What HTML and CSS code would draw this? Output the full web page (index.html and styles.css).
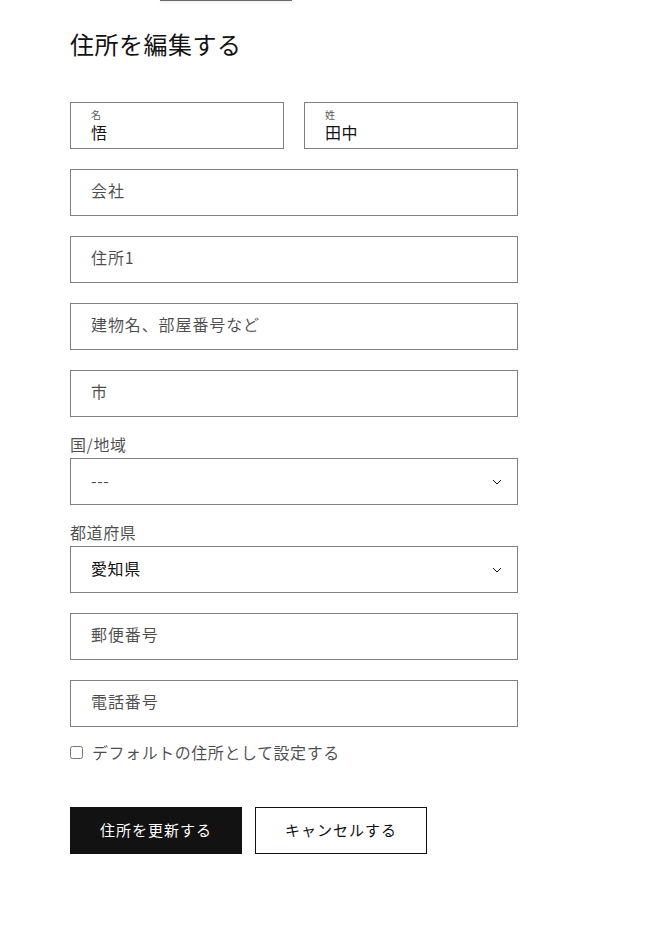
FILE: index.html
```html
<!DOCTYPE html>
<html lang="ja">
<head>
    <meta charset="UTF-8">
    <title>住所を編集する</title>
    <link rel="stylesheet" href="styles.css">
</head>
<body>
    <div class="top-edge"></div>

    <div class="container">
        <h2 class="title">住所を編集する</h2>

        <form class="address-form">
            <!-- Name row -->
            <div class="name-row">
                <div class="field filled">
                    <input type="text" id="first-name" value="悟">
                    <label for="first-name">名</label>
                </div>
                <div class="field filled">
                    <input type="text" id="last-name" value="田中">
                    <label for="last-name">姓</label>
                </div>
            </div>

            <div class="field">
                <input type="text" id="company">
                <label for="company">会社</label>
            </div>

            <div class="field">
                <input type="text" id="address1">
                <label for="address1">住所1</label>
            </div>

            <div class="field">
                <input type="text" id="address2">
                <label for="address2">建物名、部屋番号など</label>
            </div>

            <div class="field">
                <input type="text" id="city">
                <label for="city">市</label>
            </div>

            <!-- Selects -->
            <div class="select-group">
                <label class="select-label" for="country">国/地域</label>
                <div class="select">
                    <select id="country" class="muted">
                        <option>---</option>
                    </select>
                    <svg class="caret" width="10" height="6" viewBox="0 0 10 6"><path d="M1 1l4 4 4-4" fill="none" stroke="#121212" stroke-width="1"/></svg>
                </div>
            </div>

            <div class="select-group">
                <label class="select-label" for="province">都道府県</label>
                <div class="select">
                    <select id="province">
                        <option>愛知県</option>
                    </select>
                    <svg class="caret" width="10" height="6" viewBox="0 0 10 6"><path d="M1 1l4 4 4-4" fill="none" stroke="#121212" stroke-width="1"/></svg>
                </div>
            </div>

            <div class="field">
                <input type="text" id="zip">
                <label for="zip">郵便番号</label>
            </div>

            <div class="field">
                <input type="tel" id="phone">
                <label for="phone">電話番号</label>
            </div>

            <div class="checkbox-row">
                <input type="checkbox" id="default">
                <label for="default">デフォルトの住所として設定する</label>
            </div>

            <div class="buttons">
                <button type="submit" class="button primary">住所を更新する</button>
                <button type="button" class="button secondary">キャンセルする</button>
            </div>
        </form>
    </div>
</body>
</html>
```

FILE: styles.css
```css
* {
    box-sizing: border-box;
    margin: 0;
    padding: 0;
}

body {
    background: #fff;
    color: #121212;
    font-family: "Noto Sans CJK JP", "Noto Sans", sans-serif;
    letter-spacing: 0.6px;
}

.top-edge {
    width: 132px;
    height: 1px;
    margin-left: 160px;
    background: #6a6a6a;
    box-shadow: 0 1px 3px rgba(0, 0, 0, 0.15);
}

.container {
    width: 448px;
    margin-left: 70px;
}

.title {
    margin-top: 27px;
    font-size: 24px;
    font-weight: 400;
    line-height: 31px;
    letter-spacing: 0.5px;
}

.address-form {
    margin-top: 43px;
    display: flex;
    flex-direction: column;
    gap: 20px;
}

.name-row {
    display: flex;
    gap: 20px;
}

.name-row .field {
    flex: 1;
}

.field {
    position: relative;
}

.field input {
    width: 100%;
    height: 47px;
    padding: 0 20px;
    border: 1px solid #808080;
    border-radius: 0;
    background: #fff;
    font-family: inherit;
    font-size: 16px;
    letter-spacing: 0.6px;
    color: #121212;
    outline: none;
}

.field label {
    position: absolute;
    left: 21px;
    top: 50%;
    transform: translateY(-65%);
    font-size: 16px;
    line-height: 20px;
    letter-spacing: 0.9px;
    color: rgba(18, 18, 18, 0.75);
    pointer-events: none;
}

.field.filled input {
    padding-top: 13px;
}

.field.filled label {
    top: 6px;
    transform: none;
    font-size: 10px;
    line-height: 14px;
    letter-spacing: 0.4px;
}

.select-group {
    display: flex;
    flex-direction: column;
}

.select-label {
    font-size: 16px;
    line-height: 14px;
    margin-bottom: 7px;
    color: rgba(18, 18, 18, 0.75);
}

.select {
    position: relative;
}

.select select {
    width: 100%;
    height: 47px;
    padding: 0 40px 4px 20px;
    border: 1px solid #808080;
    border-radius: 0;
    background: #fff;
    font-family: inherit;
    font-size: 16px;
    letter-spacing: 0.6px;
    color: #121212;
    appearance: none;
    -webkit-appearance: none;
    outline: none;
}

.select select.muted {
    color: rgba(18, 18, 18, 0.75);
}

.caret {
    position: absolute;
    right: 16px;
    top: 21px;
    pointer-events: none;
}

.checkbox-row {
    display: flex;
    align-items: center;
    margin-top: -7px;
    height: 24px;
    font-size: 16px;
    color: rgba(18, 18, 18, 0.75);
    letter-spacing: 0.55px;
}

.checkbox-row input {
    width: 13px;
    height: 13px;
    margin: 0 9px 0 0;
}

.buttons {
    display: flex;
    gap: 13px;
    margin-top: 23px;
}

.button {
    width: 172px;
    height: 47px;
    padding-bottom: 2px;
    font-family: inherit;
    font-size: 15px;
    letter-spacing: 1px;
    border: 1px solid #121212;
    border-radius: 0;
    cursor: pointer;
}

.button.primary {
    background: #121212;
    color: #fff;
}

.button.secondary {
    background: #fff;
    color: #121212;
}
```
